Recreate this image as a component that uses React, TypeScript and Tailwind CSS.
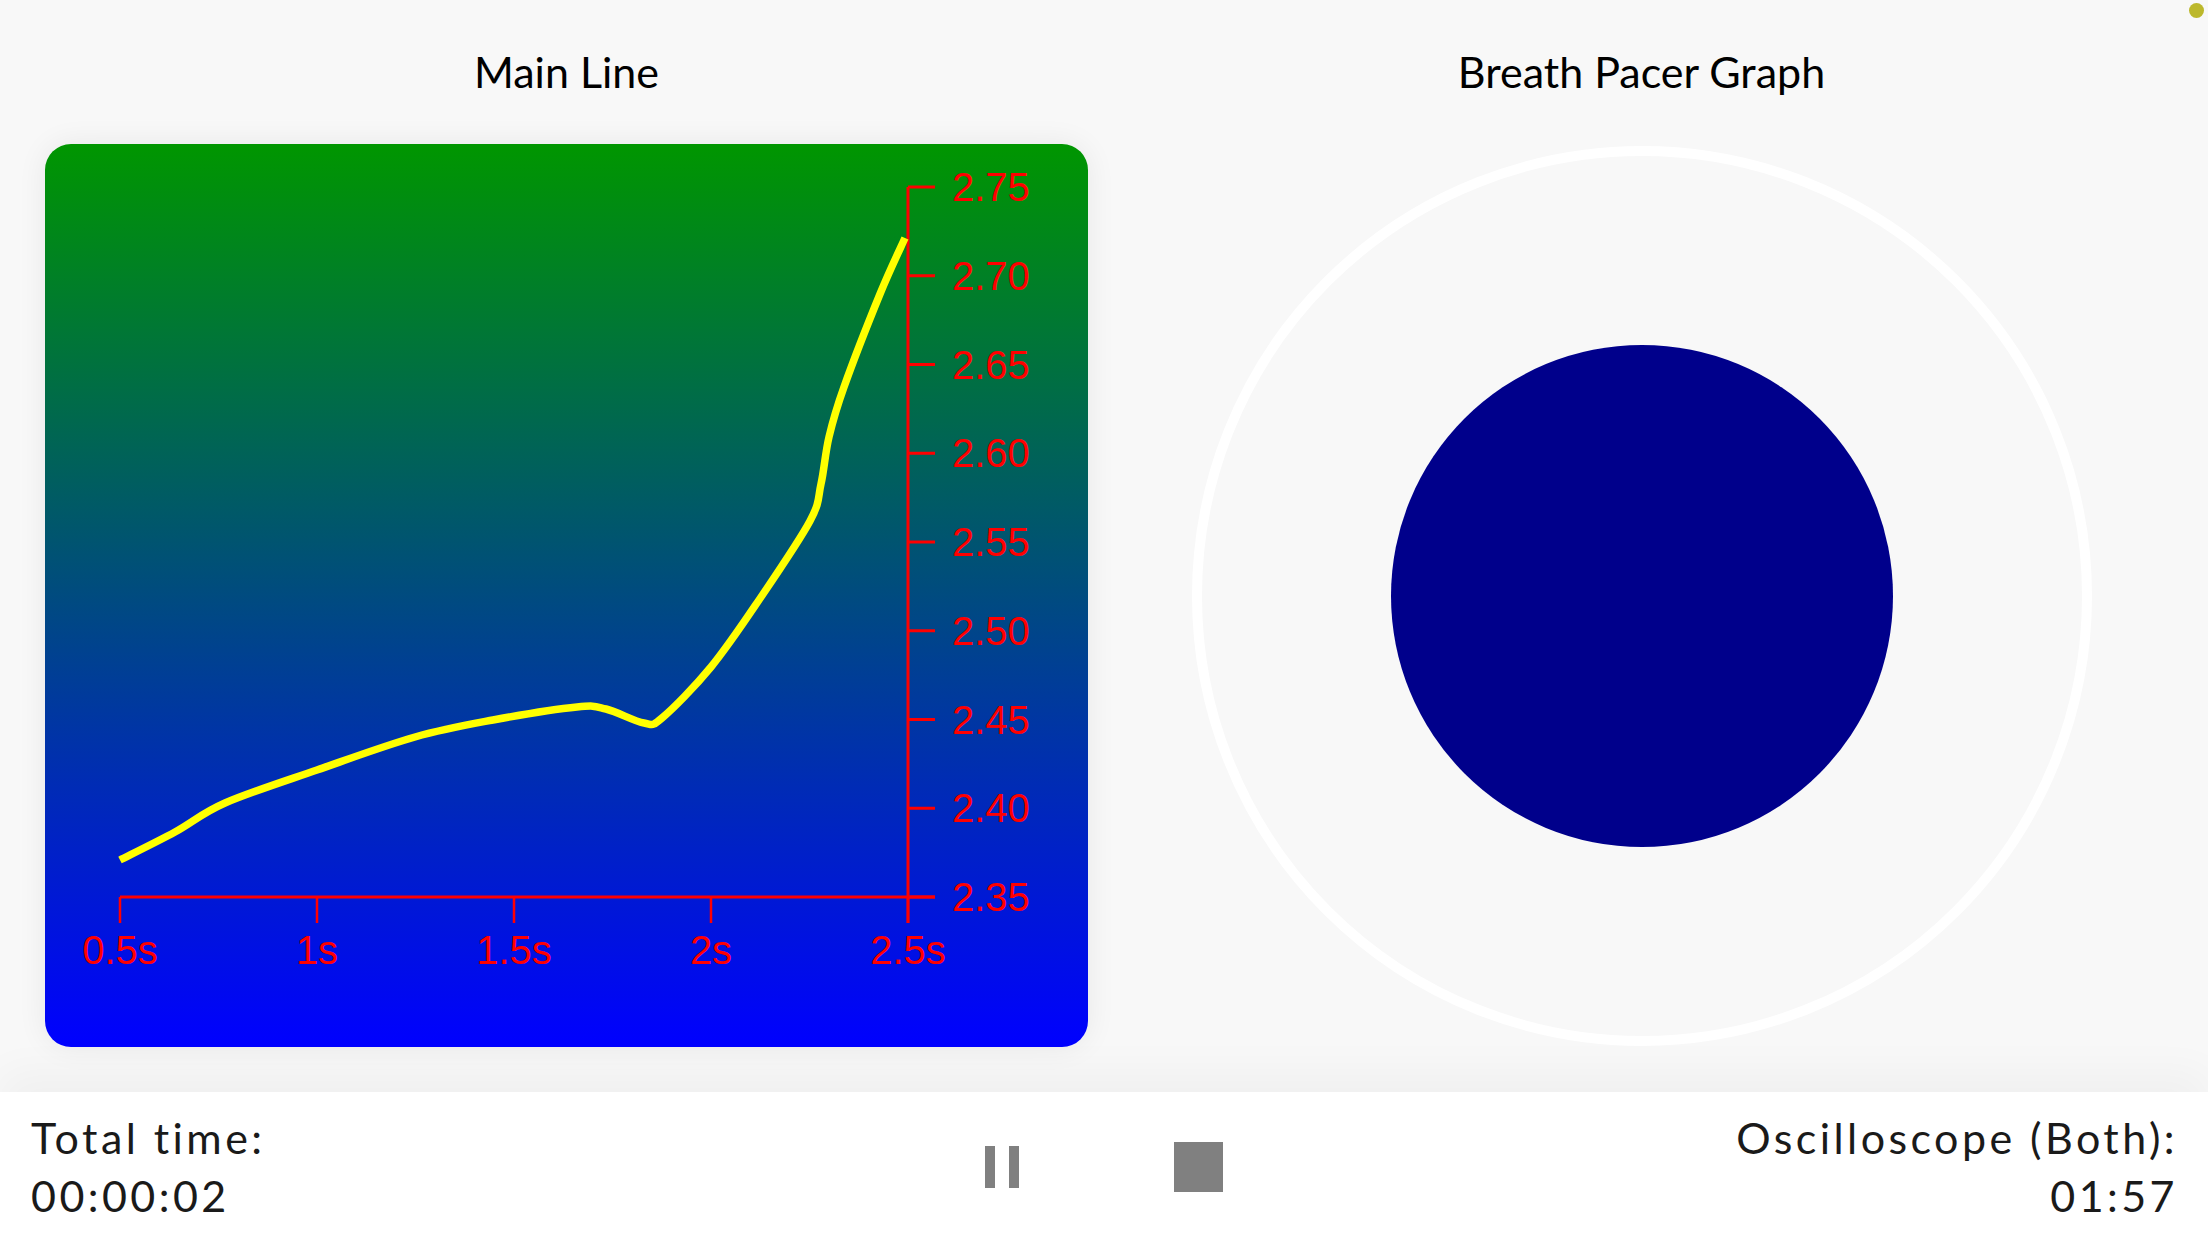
import React from 'react';

type Pt = [number, number];

// samples of the main line, in card pixels
const linePoints: Pt[] = [
  [75, 716], [130, 688], [180, 659], [272, 626], [370, 593], [448, 576],
  [532, 563], [561, 565], [599, 579], [617, 574], [666, 523], [714, 456],
  [765, 377], [776, 340], [784, 293], [799, 243], [835, 150], [860, 94]
];

const xTicks = [
  { x: 75, label: '0.5s' },
  { x: 272, label: '1s' },
  { x: 469, label: '1.5s' },
  { x: 666, label: '2s' },
  { x: 863, label: '2.5s' }
];

const yTicks = ['2.75', '2.70', '2.65', '2.60', '2.55', '2.50', '2.45', '2.40', '2.35'];

const AXIS_X = 863;
const AXIS_Y = 753;

// catmull-rom -> cubic bezier so the trace looks smooth
const smoothPath = (pts: Pt[]) => {
  let d = `M ${pts[0][0]} ${pts[0][1]}`;
  for (let i = 0; i < pts.length - 1; i++) {
    const p0 = pts[i - 1] ?? pts[i];
    const p1 = pts[i];
    const p2 = pts[i + 1];
    const p3 = pts[i + 2] ?? p2;
    const c1x = p1[0] + (p2[0] - p0[0]) / 6;
    const c1y = p1[1] + (p2[1] - p0[1]) / 6;
    const c2x = p2[0] - (p3[0] - p1[0]) / 6;
    const c2y = p2[1] - (p3[1] - p1[1]) / 6;
    d += ` C ${c1x} ${c1y}, ${c2x} ${c2y}, ${p2[0]} ${p2[1]}`;
  }
  return d;
};

const MainLineChart = () => (
  <div className="h-[903px] w-full overflow-hidden rounded-[26px] bg-[linear-gradient(to_bottom,#009600,#0000ff)] shadow-[0_0_30px_rgba(0,0,0,0.07)]">
    <svg width="1043" height="903" viewBox="0 0 1043 903">
      <g stroke="#ff0000" strokeWidth="3" fill="none">
        <line x1={75} y1={AXIS_Y} x2={AXIS_X + 27} y2={AXIS_Y} />
        <line x1={AXIS_X} y1={43} x2={AXIS_X} y2={779} />
        {xTicks.map((t) => (
          <line key={t.label} x1={t.x} y1={AXIS_Y} x2={t.x} y2={779} strokeWidth="2.5" />
        ))}
        {yTicks.map((label, i) => (
          <line key={label} x1={AXIS_X} y1={43 + i * 88.75} x2={AXIS_X + 27} y2={43 + i * 88.75} />
        ))}
      </g>
      <g fill="#ff0000" fontFamily="'Liberation Sans', Arial, sans-serif" fontSize="40">
        {yTicks.map((label, i) => (
          <text key={label} x={907} y={43 + i * 88.75} dominantBaseline="central">
            {label}
          </text>
        ))}
        {xTicks.map((t) => (
          <text key={t.label} x={t.x} y={806} textAnchor="middle" dominantBaseline="central">
            {t.label}
          </text>
        ))}
      </g>
      <path d={smoothPath(linePoints)} stroke="#ffff00" strokeWidth="7.5" fill="none" strokeLinejoin="round" />
    </svg>
  </div>
);

const BreathPacer = () => (
  <div className="flex h-[903px] w-full items-center justify-center">
    <div className="flex h-[900px] w-[900px] items-center justify-center rounded-full border-[10px] border-white">
      <div className="h-[502px] w-[502px] rounded-full bg-[#00008b]" />
    </div>
  </div>
);

const Panel = ({ title, children }: { title: string; children: React.ReactNode }) => (
  <div className="flex flex-col">
    <div className="flex h-[144px] items-center justify-center">
      <p className="text-[43px] text-black">{title}</p>
    </div>
    {children}
  </div>
);

export default function App() {
  return (
    <div className="relative flex h-[1242px] w-[2208px] flex-col overflow-hidden bg-[#f8f8f8] font-['Lato',sans-serif]">
      <span className="absolute right-[4px] top-[3px] h-[15px] w-[15px] rounded-full bg-[#bcb82c]" />
      <main className="grid flex-1 grid-cols-2 gap-[32px] px-[45px]">
        <Panel title="Main Line">
          <MainLineChart />
        </Panel>
        <Panel title="Breath Pacer Graph">
          <BreathPacer />
        </Panel>
      </main>
      <footer className="relative grid h-[150px] grid-cols-3 items-center bg-white pl-[31px] pr-[30px] text-[43px] leading-[58px] tracking-[0.08em] text-[#1a1a1a] shadow-[0_-20px_40px_rgba(0,0,0,0.035)]">
        <div>
          <p>Total time:</p>
          <p>00:00:02</p>
        </div>
        <div className="flex items-center justify-center gap-[155px]">
          <button className="flex h-[42px] w-[34px] justify-between">
            <span className="h-full w-[10px] bg-[#808080]" />
            <span className="h-full w-[10px] bg-[#808080]" />
          </button>
          <button className="h-[50px] w-[49px] bg-[#808080]" />
        </div>
        <div className="text-right">
          <p>Oscilloscope (Both):</p>
          <p>01:57</p>
        </div>
      </footer>
    </div>
  );
}
